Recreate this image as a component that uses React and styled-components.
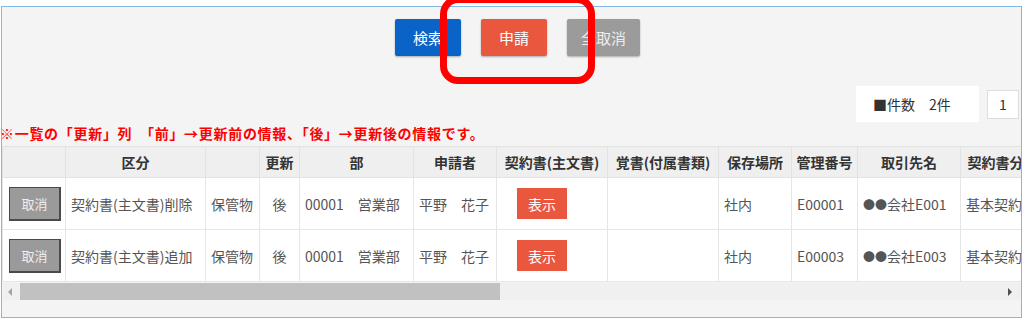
import styled, { createGlobalStyle } from 'styled-components'

const GlobalStyle = createGlobalStyle`
  html, body {
    margin: 0;
    padding: 0;
    background: #fff;
    font-family: "Noto Sans CJK JP", "Noto Sans", sans-serif;
  }
`

const Page = styled.div`
  position: relative;
  box-sizing: border-box;
  width: 1024px;
  height: 320px;
  padding: 6px 2px 2px 1px;
  display: flex;
  overflow: hidden;
`

const Panel = styled.div`
  flex: 1;
  display: flex;
  flex-direction: column;
  background: #f4f4f4;
  border: 1px solid #85b7e5;
  min-width: 0;
`

const ButtonBar = styled.div`
  display: flex;
  justify-content: center;
  gap: 20px;
  padding: 12px 0 0 12px;
`

const colors = {
  blue: '#0a64c8',
  red: '#e9573f',
  gray: '#9b9b9b',
}

const ActionButton = styled.button`
  height: 37px;
  min-width: 66px;
  padding: 0 14px;
  border: none;
  border-radius: 2px;
  background: ${(p) => colors[p.$variant]};
  color: ${(p) => (p.$variant === 'gray' ? '#ededed' : '#fff')};
  font-family: inherit;
  font-size: 15px;
  line-height: 37px;
  box-shadow: 0 1px 2px rgba(0, 0, 0, 0.3);
`

const Highlight = styled.div`
  position: absolute;
  left: 440px;
  top: -4px;
  width: 155px;
  height: 88px;
  box-sizing: border-box;
  border: 7px solid #ff0000;
  border-radius: 18px;
  pointer-events: none;
`

const CountRow = styled.div`
  display: flex;
  justify-content: flex-end;
  align-items: center;
  gap: 8px;
  margin-top: 30px;
  padding-right: 2px;
`

const CountBox = styled.div`
  width: 123px;
  height: 36px;
  box-sizing: border-box;
  background: #fff;
  padding-left: 17px;
  font-size: 14px;
  line-height: 36px;
  color: #333;
`

const PageBox = styled.div`
  width: 32px;
  height: 29px;
  box-sizing: border-box;
  background: #fff;
  border: 1px solid #ddd;
  text-align: center;
  font-size: 14px;
  line-height: 27px;
  color: #333;
`

const Note = styled.div`
  height: 24px;
  margin-left: -2px;
  font-size: 14px;
  font-weight: bold;
  letter-spacing: 0.7px;
  line-height: 22px;
  color: #ff0000;
  white-space: nowrap;
`

const TableWrap = styled.div`
  overflow: hidden;
`

const Table = styled.table`
  border-collapse: collapse;
  table-layout: fixed;
  width: 1300px;
  background: #fff;
  font-size: 14px;
  color: #555;
`

const HeadCell = styled.th`
  height: 30px;
  padding: 0 4px;
  background: #efefef;
  border: 1px solid #e2e2e2;
  color: #333;
  font-weight: bold;
  text-align: center;
  white-space: nowrap;
  overflow: hidden;
`

const Cell = styled.td`
  height: 51px;
  padding: 0 5px;
  border: 1px solid #e6e6e6;
  text-align: ${(p) => p.$align || 'left'};
  white-space: nowrap;
  overflow: hidden;
`

const Dots = styled.span`
  font-size: 12px;
`

const CancelButton = styled.button`
  width: 52px;
  height: 34px;
  box-sizing: border-box;
  background: #9a9a9a;
  border: 1px solid #4a4a4a;
  border-right-width: 2px;
  border-bottom-width: 2px;
  color: #eee;
  font-family: inherit;
  font-size: 13px;
  padding: 0;
  margin-left: 1px;
`

const ShowButton = styled.button`
  width: 50px;
  height: 31px;
  background: #e9573f;
  border: none;
  color: #fff;
  font-family: inherit;
  font-size: 14px;
  padding: 0;
  margin-left: 15px;
`

const ScrollBar = styled.div`
  display: flex;
  align-items: center;
  height: 17px;
  margin: 1px 0 0 1px;
  width: 1018px;
  background: #f0f0f0;
`

const Arrow = styled.div`
  width: 0;
  height: 0;
  border-top: 4px solid transparent;
  border-bottom: 4px solid transparent;
  ${(p) =>
    p.$dir === 'left'
      ? 'border-right: 4px solid #a3a3a3; margin: 0 8px 0 5px;'
      : 'border-left: 4px solid #505050; margin: 0 9px 0 auto;'}
`

const Thumb = styled.div`
  width: 480px;
  height: 17px;
  background: #c1c1c1;
`

const columns = [
  { w: 63, label: '' },
  { w: 140, label: '区分' },
  { w: 54, label: '' },
  { w: 40, label: '更新' },
  { w: 114, label: '部' },
  { w: 83, label: '申請者' },
  { w: 111, label: '契約書(主文書)' },
  { w: 111, label: '覚書(付属書類)' },
  { w: 73, label: '保存場所' },
  { w: 66, label: '管理番号' },
  { w: 103, label: '取引先名' },
  { w: 84, label: '契約書分類' },
  { w: 258, label: '契約期間' },
]

const rows = [
  { kind: '契約書(主文書)削除', no: 'E00001', client: '会社E001' },
  { kind: '契約書(主文書)追加', no: 'E00003', client: '会社E003' },
]

export default function App() {
  return (
    <>
      <GlobalStyle />
      <Page>
        <Panel>
          <ButtonBar>
            <ActionButton $variant="blue">検索</ActionButton>
            <ActionButton $variant="red">申請</ActionButton>
            <ActionButton $variant="gray">全取消</ActionButton>
          </ButtonBar>
          <CountRow>
            <CountBox>■件数　2件</CountBox>
            <PageBox>1</PageBox>
          </CountRow>
          <Note>※一覧の「更新」列　「前」→更新前の情報、「後」→更新後の情報です。</Note>
          <TableWrap>
            <Table>
              <colgroup>
                {columns.map((c, i) => (
                  <col key={i} style={{ width: c.w }} />
                ))}
              </colgroup>
              <thead>
                <tr>
                  {columns.map((c, i) => (
                    <HeadCell key={i}>{c.label}</HeadCell>
                  ))}
                </tr>
              </thead>
              <tbody>
                {rows.map((r) => (
                  <tr key={r.no}>
                    <Cell>
                      <CancelButton>取消</CancelButton>
                    </Cell>
                    <Cell>{r.kind}</Cell>
                    <Cell>保管物</Cell>
                    <Cell $align="center">後</Cell>
                    <Cell>00001　営業部</Cell>
                    <Cell>平野　花子</Cell>
                    <Cell>
                      <ShowButton>表示</ShowButton>
                    </Cell>
                    <Cell></Cell>
                    <Cell>社内</Cell>
                    <Cell>{r.no}</Cell>
                    <Cell>
                      <Dots>●●</Dots>
                      {r.client}
                    </Cell>
                    <Cell>基本契約書</Cell>
                    <Cell></Cell>
                  </tr>
                ))}
              </tbody>
            </Table>
          </TableWrap>
          <ScrollBar>
            <Arrow $dir="left" />
            <Thumb />
            <Arrow $dir="right" />
          </ScrollBar>
        </Panel>
        <Highlight />
      </Page>
    </>
  )
}
